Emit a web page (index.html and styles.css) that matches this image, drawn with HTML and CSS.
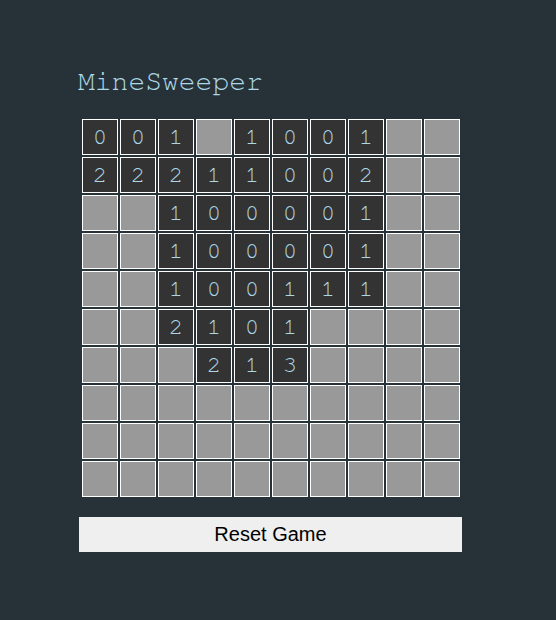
FILE: index.html
```html
<!DOCTYPE html>
<html>
<head>
<meta charset="utf-8">
<link rel="stylesheet" href="styles.css">
</head>
<body>
<div class="app">
  <h1 class="title">MineSweeper</h1>
  <div class="board">
    <div class="cell open">0</div><div class="cell open">0</div><div class="cell open">1</div><div class="cell"></div><div class="cell open">1</div><div class="cell open">0</div><div class="cell open">0</div><div class="cell open">1</div><div class="cell"></div><div class="cell"></div>
    <div class="cell open">2</div><div class="cell open">2</div><div class="cell open">2</div><div class="cell open">1</div><div class="cell open">1</div><div class="cell open">0</div><div class="cell open">0</div><div class="cell open">2</div><div class="cell"></div><div class="cell"></div>
    <div class="cell"></div><div class="cell"></div><div class="cell open">1</div><div class="cell open">0</div><div class="cell open">0</div><div class="cell open">0</div><div class="cell open">0</div><div class="cell open">1</div><div class="cell"></div><div class="cell"></div>
    <div class="cell"></div><div class="cell"></div><div class="cell open">1</div><div class="cell open">0</div><div class="cell open">0</div><div class="cell open">0</div><div class="cell open">0</div><div class="cell open">1</div><div class="cell"></div><div class="cell"></div>
    <div class="cell"></div><div class="cell"></div><div class="cell open">1</div><div class="cell open">0</div><div class="cell open">0</div><div class="cell open">1</div><div class="cell open">1</div><div class="cell open">1</div><div class="cell"></div><div class="cell"></div>
    <div class="cell"></div><div class="cell"></div><div class="cell open">2</div><div class="cell open">1</div><div class="cell open">0</div><div class="cell open">1</div><div class="cell"></div><div class="cell"></div><div class="cell"></div><div class="cell"></div>
    <div class="cell"></div><div class="cell"></div><div class="cell"></div><div class="cell open">2</div><div class="cell open">1</div><div class="cell open">3</div><div class="cell"></div><div class="cell"></div><div class="cell"></div><div class="cell"></div>
    <div class="cell"></div><div class="cell"></div><div class="cell"></div><div class="cell"></div><div class="cell"></div><div class="cell"></div><div class="cell"></div><div class="cell"></div><div class="cell"></div><div class="cell"></div>
    <div class="cell"></div><div class="cell"></div><div class="cell"></div><div class="cell"></div><div class="cell"></div><div class="cell"></div><div class="cell"></div><div class="cell"></div><div class="cell"></div><div class="cell"></div>
    <div class="cell"></div><div class="cell"></div><div class="cell"></div><div class="cell"></div><div class="cell"></div><div class="cell"></div><div class="cell"></div><div class="cell"></div><div class="cell"></div><div class="cell"></div>
  </div>
  <button class="reset">Reset Game</button>
</div>
</body>
</html>
```
FILE: styles.css
```css
html, body {
  margin: 0;
  padding: 0;
  background: #263238;
  height: 100%;
}
.app {
  padding: 66px 0 0 79px;
  display: flex;
  flex-direction: column;
  align-items: flex-start;
}
.title {
  margin: 0;
  font-family: "Nimbus Mono PS", "FreeMono", "Courier", "Liberation Mono", monospace;
  font-weight: normal;
  font-size: 28px;
  line-height: 32px;
  color: #add8e6;
  margin-left: -1px;
}
.board {
  margin: 20px 0 0 2px;
  display: grid;
  grid-template-columns: repeat(10, 36px);
  grid-auto-rows: 36px;
  gap: 2px;
  padding: 1px;
}
.cell {
  box-sizing: border-box;
  border: 1px solid #fff;
  background: #999;
  display: flex;
  align-items: center;
  justify-content: center;
  font-family: "Nimbus Mono PS", "FreeMono", "Courier", "Liberation Mono", monospace;
  font-size: 24px;
  color: #add8e6;
}
.cell.open {
  background: #333;
}
.reset {
  margin-top: 19px;
  width: 383px;
  height: 35px;
  border: none;
  background: #efefef;
  color: #000;
  font-family: "Liberation Sans", Arial, sans-serif;
  font-size: 20px;
  padding: 0;
}
```
